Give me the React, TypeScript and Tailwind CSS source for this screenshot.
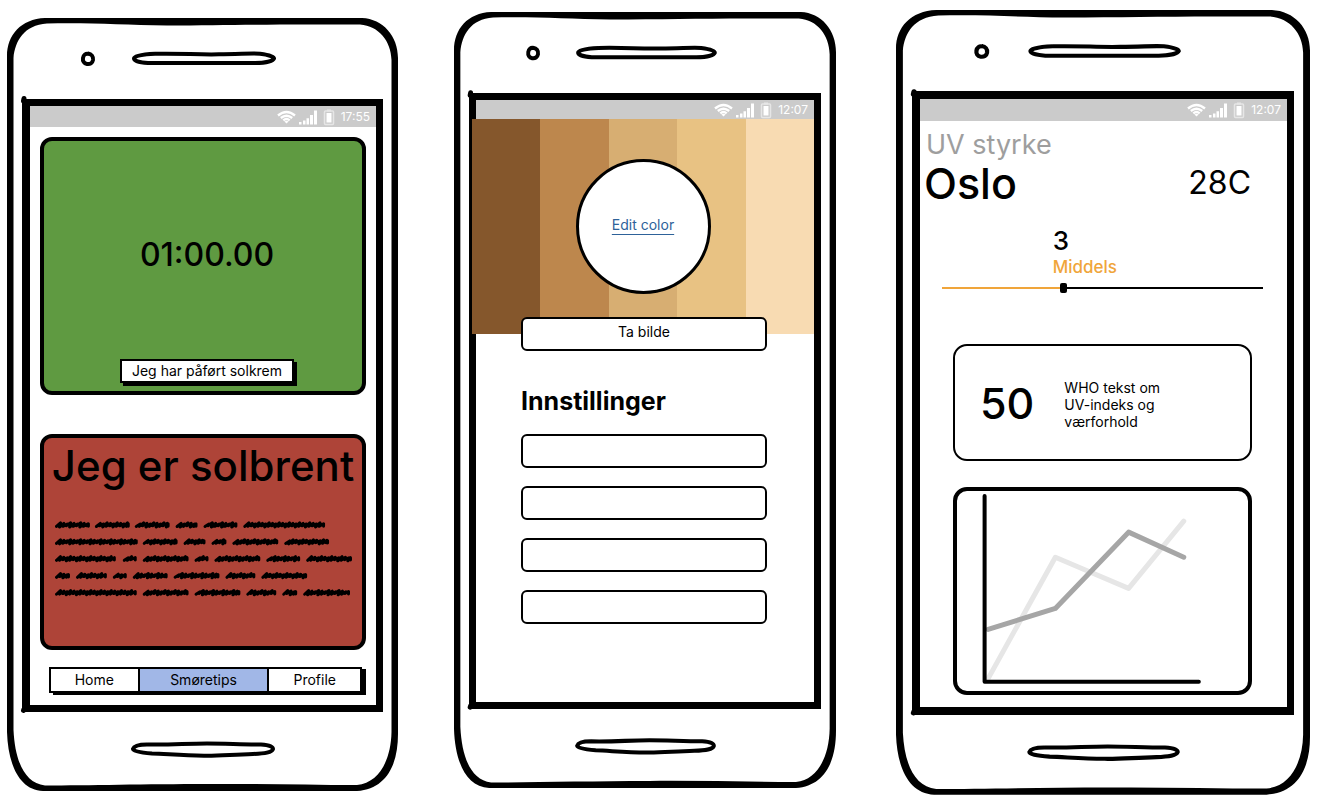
import React from "react";

function PhoneOutline() {
  return (
    <svg
      aria-hidden="true"
      className="pointer-events-none absolute inset-0 h-full w-full"
      viewBox="0 0 391 773"
      preserveAspectRatio="none"
      fill="none"
      stroke="#000"
    >
      <path
        fill="#000"
        stroke="none"
        fillRule="evenodd"
        d="M0 38 C0 17 14 1 38 0 L355 0 C376 1 391 18 391 40 L391 716 C391 746 380 771 350 773 L36 773 C12 772 1 746 0 714 Z M6.5 40 C8 23 17 7 40 5.5 C85 4.5 115 7 160 7.5 C210 7.5 250 6.5 300 6.5 L353 6.5 C372 8 384 23 384.500 42 L384.500 714 C384 742 372 765 350 767 C300 767 250 765.5 200 766 C140 766 80 767.5 38 767.5 C17 765 8 742 6.5 712 Z"
      />
      <path
        strokeWidth="4"
        d="M81 35.5 C84.5 36 86.5 38.5 86 42 C85.5 45 83 46.5 80 46 C77 45.5 75.5 43 76 40 C76.5 37 78.5 35 82 36"
      />
      <path
        strokeWidth="4"
        d="M148 35.8 C175 35.2 190 36.8 212 36.3 C232 36.3 245 35 253 35.8 C261 36.8 267 38.5 267 40.5 C266 43 258 45 248 45 L141 45 C132 44.5 127 42.5 127 40.5 C127 38 136 36.3 148 35.8"
      />
      <path
        strokeWidth="4"
        d="M140 726.5 C165 727 178 725.5 200 725.5 C218 725.5 235 726.5 254 726.5 C263 727 266 729 266 731 C265 734.5 258 735.5 246 736 C225 736.5 212 738 197 737.7 C175 737.5 160 736 145 735.5 C132 734.5 126 733 126 731 C127 728 132 726.5 140 726.5"
      />
      <path strokeWidth="5" strokeLinecap="round" d="M17 80.500 L16.500 83 M17 691 L16.500 692.500" />
    </svg>
  );
}

function StatusBar({ time, height }: { time: string; height: string }) {
  return (
    <div className={`flex items-center justify-end gap-1.5 bg-[#cbcbcb] pr-1.5 text-white ${height}`}>
      <svg aria-hidden="true" width="58" height="18" viewBox="0 0 58 18" className="shrink-0">
        <g fill="none" stroke="#fff" strokeWidth="2.4">
          <path d="M1 7.5 Q9.500 0.5 18 7.5" />
          <path d="M3.800 10 Q9.500 5.300 15.200 10" />
          <path d="M6.300 12.400 Q9.500 9.600 12.700 12.400" />
        </g>
        <path fill="#fff" d="M7.400 13.400 Q9.500 12 11.600 13.400 L9.500 15.500 Z" />
        <path fill="#fff" d="M22 14h2.500v2.500H22z M26 12.500h2.500v4H26z M29.500 10.200h2.500v6.300h-2.500z M33 7h3v9.500h-3z M37 2.500h3v14h-3z" />
        <rect x="47.500" y="3" width="9" height="13.500" rx="1" fill="#cbcbcb" stroke="#e6e6e6" strokeWidth="1.500" />
        <path fill="#e6e6e6" d="M50 1.500h4v2h-4z" />
        <path fill="#fff" d="M49.500 5h5v9.500h-5z" />
      </svg>
      <time className="text-[12px] leading-[20px]">{time}</time>
    </div>
  );
}

function Phone({ className, screen, children }: { className: string; screen: string; children: React.ReactNode }) {
  return (
    <section className={`relative ${className}`}>
      <PhoneOutline />
      <div className={`relative border-[7px] border-black bg-white ${screen}`}>{children}</div>
    </section>
  );
}

const scribbles: [number, number][][] = [
  [[0, 35], [40, 75], [80, 115], [121, 143], [149, 183], [189, 271]],
  [[0, 83], [88, 123], [129, 151], [157, 172], [178, 224], [230, 275]],
  [[0, 61], [68, 82], [88, 134], [140, 154], [160, 206], [212, 246], [252, 298]],
  [[0, 15], [21, 52], [58, 72], [78, 113], [119, 165], [171, 201], [207, 253]],
  [[0, 82], [88, 134], [140, 186], [192, 222], [228, 243], [249, 296]],
];

function scribblePath(from: number, to: number, y: number): string {
  let path = `M${from + 1.5} ${y + 1.5}`;
  let x = from + 1.5;
  let step = 0;
  while (x < to - 6) {
    const high = (step * 7 + from) % 3;
    const low = (step * 5 + to) % 3;
    path += ` L${x + 4} ${y - 2.2 + high * 0.6} L${x + 3} ${y + 0.8 + low * 0.6}`;
    x += 3.4;
    step += 1;
  }
  return path + ` L${to - 1.5} ${y - 1.2} L${to - 1.5} ${y + 1.2}`;
}

function ScribbledText() {
  return (
    <svg aria-hidden="true" viewBox="0 0 300 80" className="block w-full">
      {scribbles.map((line, row) =>
        line.map(([from, to]) => (
          <path
            key={`${row}-${from}`}
            d={scribblePath(from, to, 7 + row * 17)}
            fill="none"
            stroke="#000"
            strokeWidth="3"
            strokeLinecap="round"
            strokeLinejoin="round"
          />
        )),
      )}
    </svg>
  );
}

function HomeScreen() {
  return (
    <Phone className="mt-[18px] px-[15px] pt-[81px] pb-[79px]" screen="border-l-8 pb-3">
      <StatusBar time="17:55" height="h-[21px]" />
      <div className="px-2.5 pt-2.5">
        <div className="grid min-h-[258px] grid-rows-[1fr_auto] justify-items-center rounded-xl border-4 border-black bg-[#5f9a41] pb-2 pl-2">
          <p className="self-center pt-2.5 text-[32px] leading-[40px] font-medium">01:00.00</p>
          <button
            type="button"
            className="h-6 border-2 border-black bg-white px-2.5 text-[14px] leading-[20px] shadow-[3px_3px_0_#000]"
          >
            Jeg har påført solkrem
          </button>
        </div>
        <article className="mt-[39px] min-h-[216px] rounded-xl border-4 border-black bg-[#ae4438]">
          <h1 className="text-center text-[42px] leading-[56px] font-medium whitespace-nowrap">Jeg er solbrent</h1>
          <div className="mt-6 pr-2 pl-[11px]">
            <ScribbledText />
          </div>
        </article>
        <nav className="mt-[17px] mr-1 ml-[9px] flex h-[26px] border-2 border-black text-[14px] leading-[22px] shadow-[4px_2px_0_#000]">
          <a href="#home" className="flex-[88] bg-white text-center">Home</a>
          <a href="#tips" className="flex-[130] border-x-2 border-black bg-[#a1b7e7] text-center">Smøretips</a>
          <a href="#profile" className="flex-[92] bg-white text-center">Profile</a>
        </nav>
      </div>
    </Phone>
  );
}

const settings = ["Innstilling 1", "Innstilling 2", "Innstilling 3", "Innstilling 4"];

function ProfileScreen() {
  return (
    <Phone className="mt-[12px] px-[15px] pt-[81px] pb-[79px]" screen="min-h-[616px]">
      <StatusBar time="12:07" height="h-[19px]" />
      <div className="-ml-1 grid h-[215px]">
        <div className="col-start-1 row-start-1 grid grid-cols-5">
          <div className="bg-[#85572c]" />
          <div className="bg-[#bd874d]" />
          <div className="bg-[#d7ae72]" />
          <div className="bg-[#e8c283]" />
          <div className="bg-[#f8dbb2]" />
        </div>
        <div className="col-start-1 row-start-1 flex size-[135px] items-center justify-center self-center justify-self-center rounded-full border-[3px] border-black bg-white pb-1">
          <a href="#color" className="text-[14px] leading-[20px] text-[#2e6299] underline underline-offset-4">Edit color</a>
        </div>
      </div>
      <div className="relative -mt-[17px] flex flex-col pr-[47px] pl-[45px]">
        <button
          type="button"
          className="h-[34px] rounded-md border-2 border-black bg-white pb-1 text-[14px] leading-[20px]"
        >
          Ta bilde
        </button>
        <h2 className="mt-[34px] text-[25px] leading-[32px] font-bold">Innstillinger</h2>
        <div className="mt-[17px] flex flex-col gap-[18px]">
          {settings.map((label) => (
            <input
              key={label}
              type="text"
              aria-label={label}
              className="h-[34px] w-full rounded-md border-2 border-black bg-white px-2 text-[14px]"
            />
          ))}
        </div>
      </div>
    </Phone>
  );
}

function Chart() {
  return (
    <svg role="img" aria-label="UV" viewBox="0 0 290 199" className="block w-full" fill="none" strokeLinecap="round" strokeLinejoin="round">
      <path stroke="#e6e6e6" strokeWidth="5" d="M31 187 L98 66 L171 97 L226 30" />
      <path stroke="#a6a6a6" strokeWidth="5" d="M31 138 L98 117 L171 41 L226 66" />
      <path stroke="#000" strokeWidth="4" d="M27.500 5 L27.500 190 L241 190" />
    </svg>
  );
}

function UvScreen() {
  return (
    <Phone className="mt-[10px] ml-1 px-4 pt-[81px] pb-[80px]" screen="border-y-8 border-l-8 pb-3">
      <StatusBar time="12:07" height="h-[22px]" />
      <div className="pt-2 pl-1">
        <p className="pl-0.5 text-[27px] leading-[32px] text-[#9e9e9e]">UV styrke</p>
        <div className="flex items-center justify-between pr-9">
          <h1 className="text-[43px] leading-[44px] font-medium">Oslo</h1>
          <p className="text-[32px] leading-[44px]">28C</p>
        </div>
      </div>
      <div className="pt-[22px] pr-6 pl-[22px]">
        <label htmlFor="uv" className="block pl-[34.500%]">
          <span className="block text-[26px] leading-[28px] font-medium">3</span>
          <span className="block text-[17px] leading-[24px] font-medium text-[#f0a53a]">Middels</span>
        </label>
        <input
          id="uv"
          type="range"
          min="0"
          max="8"
          defaultValue="3"
          className="mt-[3px] block h-3 w-full appearance-none bg-[linear-gradient(to_right,#f0a53a_37.5%,#000_37.5%)] bg-[length:100%_2px] bg-center bg-no-repeat [&::-webkit-slider-thumb]:h-[10px] [&::-webkit-slider-thumb]:w-[7px] [&::-webkit-slider-thumb]:appearance-none [&::-webkit-slider-thumb]:rounded-[2px] [&::-webkit-slider-thumb]:bg-black"
        />
      </div>
      <div className="pt-[50px] pr-[35px] pl-[33px]">
        <div className="flex min-h-[117px] items-center gap-[30px] rounded-[14px] border-2 border-black pl-[25px]">
          <strong className="text-[43px] leading-[48px] font-medium">50</strong>
          <p className="pt-1 text-[14px] leading-[17px]">
            WHO tekst om
            <br />
            UV-indeks og
            <br />
            værforhold
          </p>
        </div>
        <div className="mt-[26px] rounded-[14px] border-4 border-black">
          <Chart />
        </div>
      </div>
    </Phone>
  );
}

export default function App() {
  return (
    <main className="grid min-h-screen grid-cols-[391fr_382fr_418fr] items-start gap-x-14 bg-white pr-4 pl-[7px] font-['Inter',sans-serif] text-black">
      <HomeScreen />
      <ProfileScreen />
      <UvScreen />
    </main>
  );
}
